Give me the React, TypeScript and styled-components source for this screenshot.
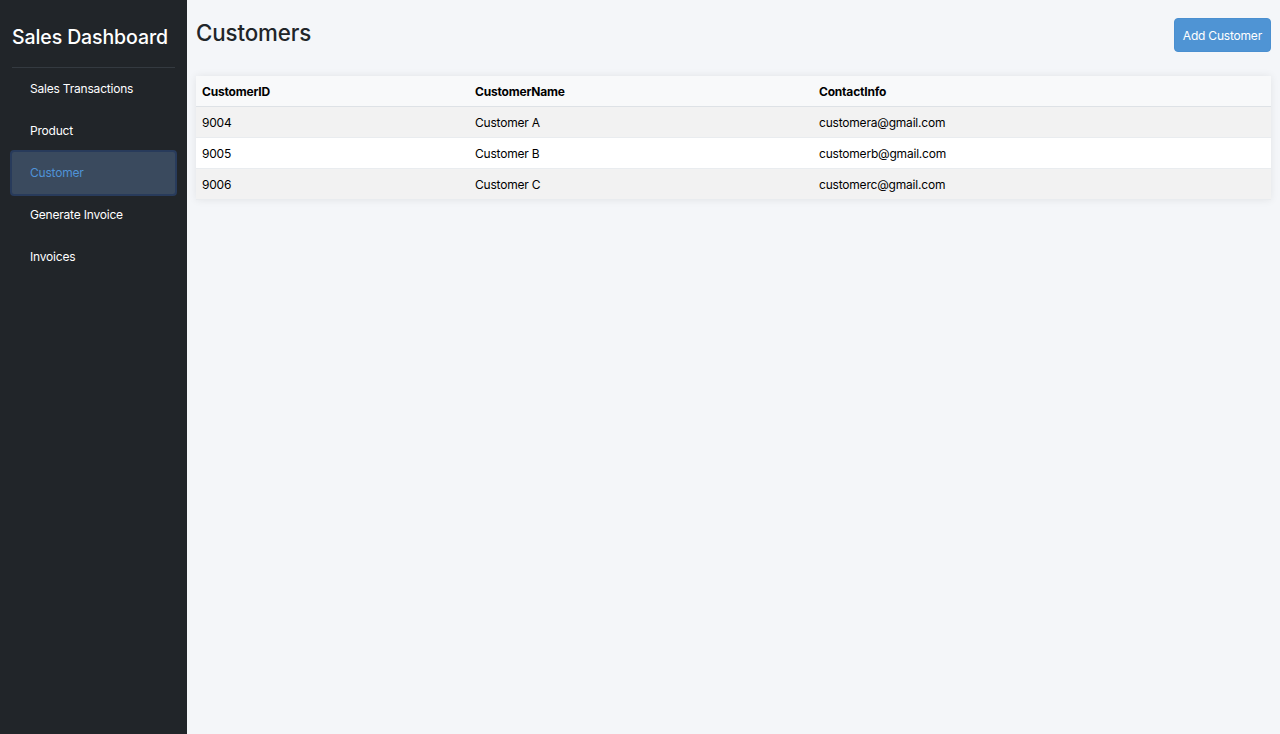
import React from "react"
import styled, { createGlobalStyle } from "styled-components"

const GlobalStyle = createGlobalStyle`
  html, body {
    margin: 0;
    padding: 0;
    height: 100%;
  }
  body {
    font-family: Inter, "Noto Sans", "Liberation Sans", sans-serif;
    background: #f4f6f9;
    color: #212529;
  }
  #root {
    height: 100%;
  }
`

const Layout = styled.div`
  display: flex;
  min-height: 734px;
`

const Sidebar = styled.aside`
  width: 187px;
  flex-shrink: 0;
  background: #212529;
  color: #fff;
  padding: 0 10px;
  box-sizing: border-box;
`

const Brand = styled.h1`
  font-size: 19.5px;
  font-weight: 500;
  letter-spacing: -0.1px;
  margin: 0 2px;
  padding: 25px 0 18px;
  border-bottom: 1px solid #343a40;
  white-space: nowrap;
`

const Nav = styled.nav`
  display: flex;
  flex-direction: column;
`

const NavItem = styled.a<{ $active?: boolean }>`
  display: block;
  font-size: 12px;
  letter-spacing: -0.2px;
  padding: 0 18px;
  border-radius: 4px;
  box-sizing: border-box;
  color: ${(p) => (p.$active ? "#4f93d8" : "#fff")};
  background: ${(p) => (p.$active ? "#3a4a5e" : "transparent")};
  border: 2px solid ${(p) => (p.$active ? "#283b5b" : "transparent")};
  height: ${(p) => (p.$active ? "46px" : "42px")};
  line-height: ${(p) => (p.$active ? "42px" : "38px")};
  margin: ${(p) => (p.$active ? "-2px 0" : "0")};
  cursor: pointer;
  text-decoration: none;
`

const Main = styled.main`
  flex: 1;
  padding: 18px 9px;
  min-width: 0;
`

const Header = styled.div`
  display: flex;
  justify-content: space-between;
  align-items: flex-start;
  margin-bottom: 24px;
`

const PageTitle = styled.h2`
  margin: 0;
  font-size: 22.3px;
  font-weight: 500;
  letter-spacing: -0.1px;
  line-height: 30px;
`

const Button = styled.button`
  background: #4f94d4;
  color: #fff;
  border: 1px solid #4a8fd0;
  border-radius: 4px;
  font-family: inherit;
  font-size: 12px;
  letter-spacing: -0.2px;
  height: 34px;
  padding: 0 8px;
  cursor: pointer;
`

const Table = styled.table`
  width: 100%;
  border-collapse: collapse;
  table-layout: fixed;
  font-size: 12px;
  letter-spacing: -0.2px;
  box-shadow: 0 0 8px rgba(0, 0, 0, 0.08);
`

const Th = styled.th<{ $w: number }>`
  width: ${(p) => p.$w}px;
  text-align: left;
  font-weight: 700;
  padding: 0 6px;
  height: 30px;
  background: #f8f9fa;
  border-bottom: 1px solid #dee2e6;
  color: #000;
`

const Row = styled.tr<{ $odd: boolean }>`
  background: ${(p) => (p.$odd ? "#f2f2f2" : "#fff")};
`

const Td = styled.td`
  padding: 1px 6px 0;
  height: 29px;
  border-bottom: 1px solid #e9ecef;
  color: #000;
`

const customers = [
  { id: 9004, name: "Customer A", contact: "customera@gmail.com" },
  { id: 9005, name: "Customer B", contact: "customerb@gmail.com" },
  { id: 9006, name: "Customer C", contact: "customerc@gmail.com" },
]

const links = ["Sales Transactions", "Product", "Customer", "Generate Invoice", "Invoices"]

const App = () => {
  return (
    <>
      <GlobalStyle />
      <Layout>
        <Sidebar>
          <Brand>Sales Dashboard</Brand>
          <Nav>
            {links.map((l) => (
              <NavItem key={l} $active={l === "Customer"}>
                {l}
              </NavItem>
            ))}
          </Nav>
        </Sidebar>
        <Main>
          <Header>
            <PageTitle>Customers</PageTitle>
            <Button>Add Customer</Button>
          </Header>
          <Table>
            <thead>
              <tr>
                <Th $w={261}>CustomerID</Th>
                <Th $w={332}>CustomerName</Th>
                <Th $w={446}>ContactInfo</Th>
              </tr>
            </thead>
            <tbody>
              {customers.map((c, i) => (
                <Row key={c.id} $odd={i % 2 === 0}>
                  <Td>{c.id}</Td>
                  <Td>{c.name}</Td>
                  <Td>{c.contact}</Td>
                </Row>
              ))}
            </tbody>
          </Table>
        </Main>
      </Layout>
    </>
  )
}

export default App
